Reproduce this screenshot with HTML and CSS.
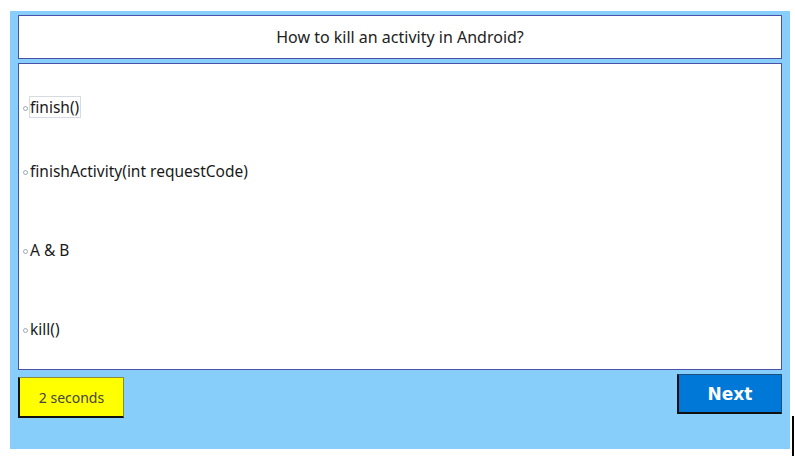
FILE: index.html
```html
<!DOCTYPE html>
<html>
<head>
<meta charset="utf-8">
<link rel="stylesheet" href="styles.css">
</head>
<body>
<div class="app">
  <div class="question">How to kill an activity in Android?</div>
  <div class="options">
    <div class="option"><span class="dot"></span><span class="label focused">finish()</span></div>
    <div class="option"><span class="dot"></span><span class="label">finishActivity(int requestCode)</span></div>
    <div class="option"><span class="dot"></span><span class="label">A &amp; B</span></div>
    <div class="option"><span class="dot"></span><span class="label">kill()</span></div>
  </div>
  <div class="footer">
    <div class="timer">2 seconds</div>
    <button class="next">Next</button>
  </div>
</div>
<div class="caret"></div>
</body>
</html>
```
FILE: styles.css
```css
html, body {
  margin: 0;
  padding: 0;
  background: #ffffff;
}
body {
  position: relative;
  width: 795px;
  height: 456px;
  overflow: hidden;
  font-family: "Noto Sans", "Open Sans", sans-serif;
}
.app {
  margin: 11px 0 0 10px;
  width: 780px;
  height: 438px;
  background: #87cefa;
  box-sizing: border-box;
  padding: 4px 8px 0 8px;
  display: flex;
  flex-direction: column;
}
.question {
  height: 44px;
  box-sizing: border-box;
  border: 1px solid #4a52a8;
  background: #ffffff;
  display: flex;
  align-items: center;
  justify-content: center;
  font-size: 16px;
  color: #222222;
}
.options {
  margin-top: 4px;
  height: 307px;
  box-sizing: border-box;
  border: 1px solid #4a52a8;
  background: #ffffff;
  display: flex;
  flex-direction: column;
  padding-left: 4px;
}
.option {
  display: flex;
  align-items: center;
  height: 20px;
  font-size: 15.5px;
  color: #1a1a1a;
}
.option:nth-child(1) { margin-top: 33px; }
.option:nth-child(2) { margin-top: 44px; }
.option:nth-child(3) { margin-top: 59px; }
.option:nth-child(4) { margin-top: 59px; }
.dot {
  width: 3px;
  height: 3px;
  border: 1px solid #9aa8b8;
  border-radius: 50%;
  margin-right: 1px;
  margin-top: 2px;
}
.label {
  line-height: 20px;
  border: 1px solid transparent;
  padding: 0 1px 0 0;
}
.label.focused {
  border-color: #d6dbe3;
}
.footer {
  display: flex;
  justify-content: space-between;
  align-items: flex-start;
  margin-top: 4px;
}
.timer {
  margin-top: 3px;
  width: 106px;
  height: 41px;
  box-sizing: border-box;
  background: #ffff00;
  border-top: 1px solid #8a8a40;
  border-right: 1px solid #8a8a40;
  border-left: 2px solid #111111;
  border-bottom: 2px solid #111111;
  display: flex;
  align-items: center;
  justify-content: center;
  font-size: 14px;
  color: #444444;
}
.next {
  width: 105px;
  height: 40px;
  box-sizing: border-box;
  background: #0078d7;
  border-top: 1px solid #1c4f80;
  border-right: 1px solid #1c4f80;
  border-left: 2px solid #111111;
  border-bottom: 2px solid #111111;
  color: #ffffff;
  font-family: "DejaVu Sans", Verdana, sans-serif;
  font-weight: bold;
  font-size: 17px;
  padding: 0;
}
.caret {
  position: absolute;
  left: 792px;
  top: 416px;
  width: 2px;
  height: 40px;
  background: #000000;
}
```
